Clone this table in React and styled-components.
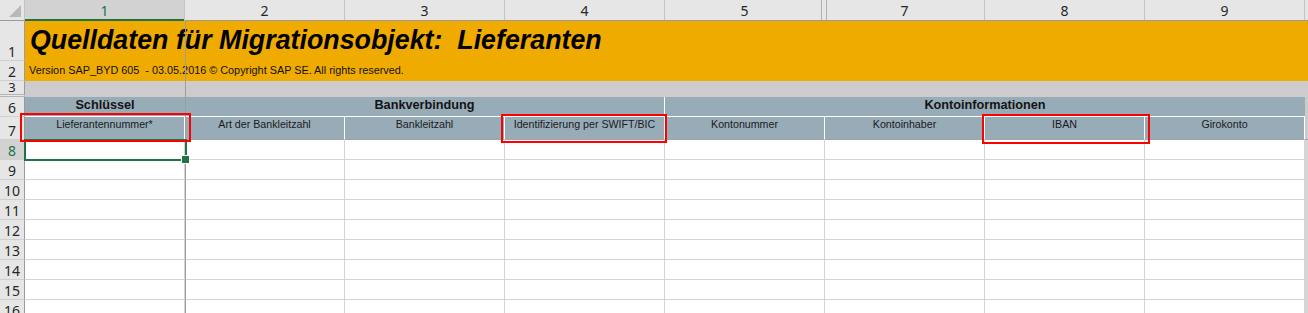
import React from "react"
import styled, { createGlobalStyle } from "styled-components"

const GlobalStyle = createGlobalStyle`
  html, body {
    margin: 0;
    padding: 0;
    background: #fff;
  }
  body {
    font-family: "Liberation Sans", Arial, sans-serif;
  }
  * {
    box-sizing: border-box;
  }
`

const columns = ["1", "2", "3", "4", "5", "7", "8", "9"]
const labels = [
  "Lieferantennummer*",
  "Art der Bankleitzahl",
  "Bankleitzahl",
  "Identifizierung per SWIFT/BIC",
  "Kontonummer",
  "Kontoinhaber",
  "IBAN",
  "Girokonto",
]
const bodyRows = [8, 9, 10, 11, 12, 13, 14, 15, 16]

const Sheet = styled.div`
  position: relative;
  width: 1308px;
  height: 313px;
  overflow: hidden;
  background: #fff;
`

const HeaderRow = styled.div`
  display: grid;
  grid-template-columns: 25px repeat(8, 160px) 1fr;
  height: 21px;
  background: #e6e6e6;
  border-bottom: 1px solid #9b9b9b;
`

const Corner = styled.div`
  position: relative;
  border-right: 1px solid #c4c4c4;
  &::after {
    content: "";
    position: absolute;
    right: 3px;
    bottom: 3px;
    width: 12px;
    height: 12px;
    background: #b9b9b9;
    clip-path: polygon(100% 0, 100% 100%, 0 100%);
  }
`

const ColHead = styled.div`
  position: relative;
  display: flex;
  align-items: center;
  justify-content: center;
  font-family: "Noto Sans", "Liberation Sans", sans-serif;
  font-size: 14px;
  color: ${p => (p.$selected ? "#217346" : "#262626")};
  background: ${p => (p.$selected ? "#d2d2d2" : "#e6e6e6")};
  border-right: 1px solid #c4c4c4;
  box-shadow: ${p => (p.$selected ? "inset 0 -2px 0 #217346" : "none")};
  margin-bottom: ${p => (p.$selected ? "-1px" : "0")};
  &::after {
    content: "";
    display: ${p => (p.$hiddenAfter ? "block" : "none")};
    position: absolute;
    right: -3px;
    top: 0;
    bottom: 0;
    width: 4px;
    border-left: 1px solid #b0b0b0;
    border-right: 1px solid #b0b0b0;
    background: #e6e6e6;
    z-index: 1;
  }
`

const HeaderFiller = styled.div`
  background: #e6e6e6;
`

const Row = styled.div`
  display: grid;
  grid-template-columns: 25px 1fr;
  height: ${p => p.$h}px;
`

const RowHead = styled.div`
  display: flex;
  align-items: flex-end;
  justify-content: center;
  padding-bottom: ${p => (p.$hiddenBelow ? "0" : "1px")};
  font-family: "Noto Sans", "Liberation Sans", sans-serif;
  font-size: ${p => (p.$hiddenBelow ? "13px" : "14px")};
  line-height: ${p => (p.$hiddenBelow ? "13px" : "15px")};
  color: ${p => (p.$selected ? "#217346" : "#262626")};
  background: ${p => (p.$selected ? "#d2d2d2" : "#e6e6e6")};
  border-right: 1px solid #9b9b9b;
  border-bottom: ${p => (p.$hiddenBelow ? "3px double #b4b4b4" : "1px solid #cfcfcf")};
`

const Banner = styled.div`
  background: #f0ab00;
  padding-left: ${p => p.$indent}px;
  padding-top: ${p => p.$top}px;
`

const Title = styled.h1`
  margin: 0;
  font-size: 26.8px;
  line-height: 30px;
  font-weight: bold;
  font-style: italic;
  color: #000;
  white-space: pre;
`

const Version = styled.div`
  font-size: 10.85px;
  line-height: 13px;
  color: #111;
  white-space: pre;
`

const Band = styled.div`
  background: #cccccc;
`

const GroupRow = styled.div`
  display: grid;
  grid-template-columns: 160px 480px 640px 1fr;
`

const Group = styled.div`
  background: #98acb8;
  border-bottom: 1px solid #fff;
  border-right: ${p => (p.$divider ? "1px solid #fff" : "none")};
  text-align: center;
  font-size: 12.7px;
  font-weight: bold;
  line-height: 16px;
  color: #141414;
`

const LabelRow = styled.div`
  display: grid;
  grid-template-columns: repeat(8, 160px) 1fr;
`

const Label = styled.div`
  background: #98acb8;
  border-right: 1px solid #fff;
  border-bottom: 1px solid #a3a3a3;
  padding-top: 1px;
  text-align: center;
  font-size: 10.67px;
  line-height: 13px;
  color: #1a1a1a;
  white-space: nowrap;
`

const Filler = styled.div`
  background: ${p => p.$color || "#d6d6d6"};
  border-bottom: ${p => (p.$line ? "1px solid #a3a3a3" : "none")};
`

const CellRow = styled.div`
  display: grid;
  grid-template-columns: repeat(8, 160px) 1fr;
`

const Cell = styled.div`
  background: #fff;
  border-right: 1px solid #d4d4d4;
  border-bottom: 1px solid #d4d4d4;
`

const FreezeLine = styled.div`
  position: absolute;
  left: 185px;
  top: 21px;
  bottom: 0;
  width: 1px;
  background: #9e9e9e;
`

const Selection = styled.div`
  position: absolute;
  left: 24px;
  top: 139px;
  width: 163px;
  height: 22px;
  border: 2px solid #217346;
  &::after {
    content: "";
    position: absolute;
    right: -5px;
    bottom: -5px;
    width: 7px;
    height: 7px;
    background: #217346;
    border: 1px solid #fff;
  }
`

const Marker = styled.div`
  position: absolute;
  left: ${p => p.$x}px;
  top: ${p => p.$y}px;
  width: ${p => p.$w}px;
  height: ${p => p.$h}px;
  border: 2px solid #ff0000;
`

const App = () => (
  <Sheet>
    <GlobalStyle />
    <HeaderRow>
      <Corner />
      {columns.map((c, i) => (
        <ColHead key={c} $selected={i === 0} $hiddenAfter={c === "5"}>
          {c}
        </ColHead>
      ))}
      <HeaderFiller />
    </HeaderRow>

    <Row $h={40}>
      <RowHead>1</RowHead>
      <Banner $indent={5} $top={4}>
        <Title>Quelldaten für Migrationsobjekt:  Lieferanten</Title>
      </Banner>
    </Row>
    <Row $h={20}>
      <RowHead>2</RowHead>
      <Banner $indent={4} $top={3}>
        <Version>Version SAP_BYD 605  - 03.05.2016 © Copyright SAP SE. All rights reserved.</Version>
      </Banner>
    </Row>
    <Row $h={16}>
      <RowHead $hiddenBelow>3</RowHead>
      <Band />
    </Row>
    <Row $h={20}>
      <RowHead>6</RowHead>
      <GroupRow>
        <Group>Schlüssel</Group>
        <Group $divider>Bankverbindung</Group>
        <Group>Kontoinformationen</Group>
        <Filler $color="#cccccc" />
      </GroupRow>
    </Row>
    <Row $h={23}>
      <RowHead>7</RowHead>
      <LabelRow>
        {labels.map(l => (
          <Label key={l}>{l}</Label>
        ))}
        <Filler $color="#cccccc" $line />
      </LabelRow>
    </Row>
    {bodyRows.map(n => (
      <Row key={n} $h={20}>
        <RowHead $selected={n === 8}>{n}</RowHead>
        <CellRow>
          {columns.map(c => (
            <Cell key={c} />
          ))}
          <Filler />
        </CellRow>
      </Row>
    ))}

    <FreezeLine />
    <Selection />
    <Marker $x={20} $y={113} $w={171} $h={29} />
    <Marker $x={501} $y={114} $w={166} $h={29} />
    <Marker $x={982} $y={114} $w={168} $h={30} />
  </Sheet>
)

export default App
